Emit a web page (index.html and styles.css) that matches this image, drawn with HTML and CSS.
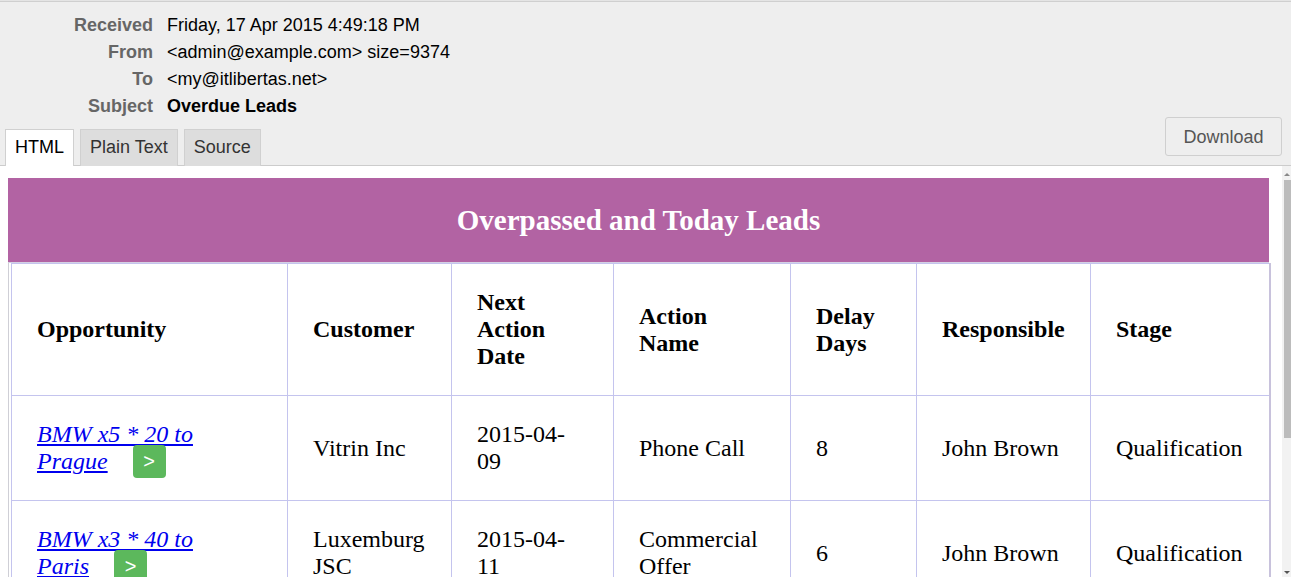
FILE: index.html
```html
<!DOCTYPE html>
<html>
<head>
<meta charset="utf-8">
<title>Overdue Leads</title>
<link rel="stylesheet" href="styles.css">
</head>
<body>
<div class="header">
  <div class="meta">
    <div class="label">Received</div><div class="value">Friday, 17 Apr 2015 4:49:18 PM</div>
    <div class="label">From</div><div class="value">&lt;admin@example.com&gt; size=9374</div>
    <div class="label">To</div><div class="value">&lt;my@itlibertas.net&gt;</div>
    <div class="label">Subject</div><div class="value strong">Overdue Leads</div>
  </div>
  <div class="tabbar">
    <div class="tab active">HTML</div>
    <div class="tab">Plain Text</div>
    <div class="tab">Source</div>
    <div class="spacer"></div>
    <div class="download">Download</div>
  </div>
</div>
<div class="viewer">
  <div class="frame">
    <div class="report">
      <div class="banner">Overpassed and Today Leads</div>
      <div class="grid-wrap">
        <table class="leads">
          <colgroup>
            <col class="c1"><col class="c2"><col class="c3"><col class="c4"><col class="c5"><col class="c6"><col class="c7">
          </colgroup>
          <tr>
            <th>Opportunity</th><th>Customer</th><th>Next Action Date</th><th>Action Name</th><th>Delay Days</th><th>Responsible</th><th>Stage</th>
          </tr>
          <tr>
            <td><a href="#">BMW x5 * 20 to</a> <span class="nw"><a href="#">Prague</a><span class="go">&gt;</span></span></td>
            <td>Vitrin Inc</td><td>2015-04-09</td><td>Phone Call</td><td>8</td><td>John Brown</td><td>Qualification</td>
          </tr>
          <tr>
            <td><a href="#">BMW x3 * 40 to</a> <span class="nw"><a href="#">Paris</a><span class="go">&gt;</span></span></td>
            <td>Luxemburg JSC</td><td>2015-04-11</td><td>Commercial Offer</td><td>6</td><td>John Brown</td><td>Qualification</td>
          </tr>
        </table>
      </div>
    </div>
  </div>
  <div class="scrollbar">
    <div class="arrow up"></div>
    <div class="thumb"></div>
    <div class="track-fill"></div>
    <div class="arrow down"></div>
  </div>
</div>
</body>
</html>
```

FILE: styles.css
```css
html, body {
  margin: 0;
  padding: 0;
  height: 577px;
  overflow: hidden;
  background: #fff;
}
body {
  font-family: "Liberation Sans", Arial, sans-serif;
}
.header {
  background: #eeeeee;
  border-top: 1px solid #e4e4e4;
  box-shadow: inset 0 1px 0 #cfcfcf;
  padding-top: 11px;
}
.meta {
  display: grid;
  grid-template-columns: 153px auto;
  column-gap: 14px;
  font-size: 18px;
  line-height: 27px;
}
.label {
  text-align: right;
  font-weight: bold;
  color: #666;
}
.value {
  color: #000;
}
.value.strong {
  font-weight: bold;
}
.tabbar {
  display: flex;
  align-items: flex-end;
  border-bottom: 1px solid #cccccc;
  padding-left: 5px;
  padding-right: 9px;
  margin-top: -3px;
  height: 48px;
}
.tab {
  height: 37px;
  box-sizing: border-box;
  padding: 0 9px;
  margin-right: 6px;
  margin-bottom: -1px;
  border: 1px solid #d0d0d0;
  border-bottom: none;
  background: #dddddd;
  color: #333;
  font-size: 18px;
  line-height: 35px;
}
.tab.active {
  background: #ffffff;
  color: #000;
}
.spacer {
  flex: 1;
}
.download {
  align-self: flex-start;
  height: 39px;
  box-sizing: border-box;
  width: 117px;
  border: 1px solid #cfcfcf;
  border-radius: 3px;
  background: #eeeeee;
  color: #555;
  font-size: 18px;
  line-height: 38px;
  text-align: center;
}
.viewer {
  display: flex;
  height: 411px;
  background: #fff;
}
.frame {
  flex: 1;
  overflow: hidden;
  padding: 12px 0 0 8px;
}
.report {
  width: 1261px;
}
.banner {
  background: #b263a3;
  height: 84px;
  color: #fff;
  font-family: "Liberation Serif", "Times New Roman", serif;
  font-weight: bold;
  font-size: 29px;
  line-height: 84px;
  text-align: center;
}
.grid-wrap {
  border-left: 1px solid #cfcfd6;
  border-top: 1px solid #d4d0e4;
  padding-left: 2px;
}
.leads {
  border-collapse: collapse;
  table-layout: fixed;
  width: 1258px;
  font-family: "Liberation Serif", "Times New Roman", serif;
  font-size: 24px;
  line-height: 27px;
}
.c1 { width: 276px; }
.c2 { width: 164px; }
.c3 { width: 162px; }
.c4 { width: 177px; }
.c5 { width: 126px; }
.c6 { width: 174px; }
.c7 { width: 179px; }
.leads th, .leads td {
  border: 1px solid #c4c4ee;
  padding: 25px;
  text-align: left;
  vertical-align: middle;
}
.leads th {
  font-weight: bold;
}
.leads td:last-child, .leads th:last-child {
  border-right: 2px solid #c8c2dc;
}
.leads a {
  color: #0000ee;
  font-style: italic;
  text-decoration: underline;
}
.nw {
  white-space: nowrap;
}
.go {
  display: inline-block;
  vertical-align: 1px;
  height: 33px;
  width: 33px;
  margin: -3px 0 -3px 25px;
  border-radius: 4px;
  background: #5cb85c;
  color: #fff;
  font-family: "Liberation Sans", Arial, sans-serif;
  font-size: 20px;
  line-height: 33px;
  text-align: center;
}
.scrollbar {
  width: 9px;
  background: #f2f2f2;
  display: flex;
  flex-direction: column;
  align-items: flex-end;
}
.arrow {
  width: 0;
  height: 0;
  border-left: 3px solid transparent;
  border-right: 3px solid transparent;
  margin-right: 1px;
}
.arrow.up {
  border-bottom: 3px solid #888;
  margin-top: 7px;
  margin-bottom: 4px;
}
.arrow.down {
  border-top: 3px solid #555;
  margin-bottom: 3px;
}
.thumb {
  width: 7px;
  height: 258px;
  background: #bcbcbc;
}
.track-fill {
  flex: 1;
}
```
